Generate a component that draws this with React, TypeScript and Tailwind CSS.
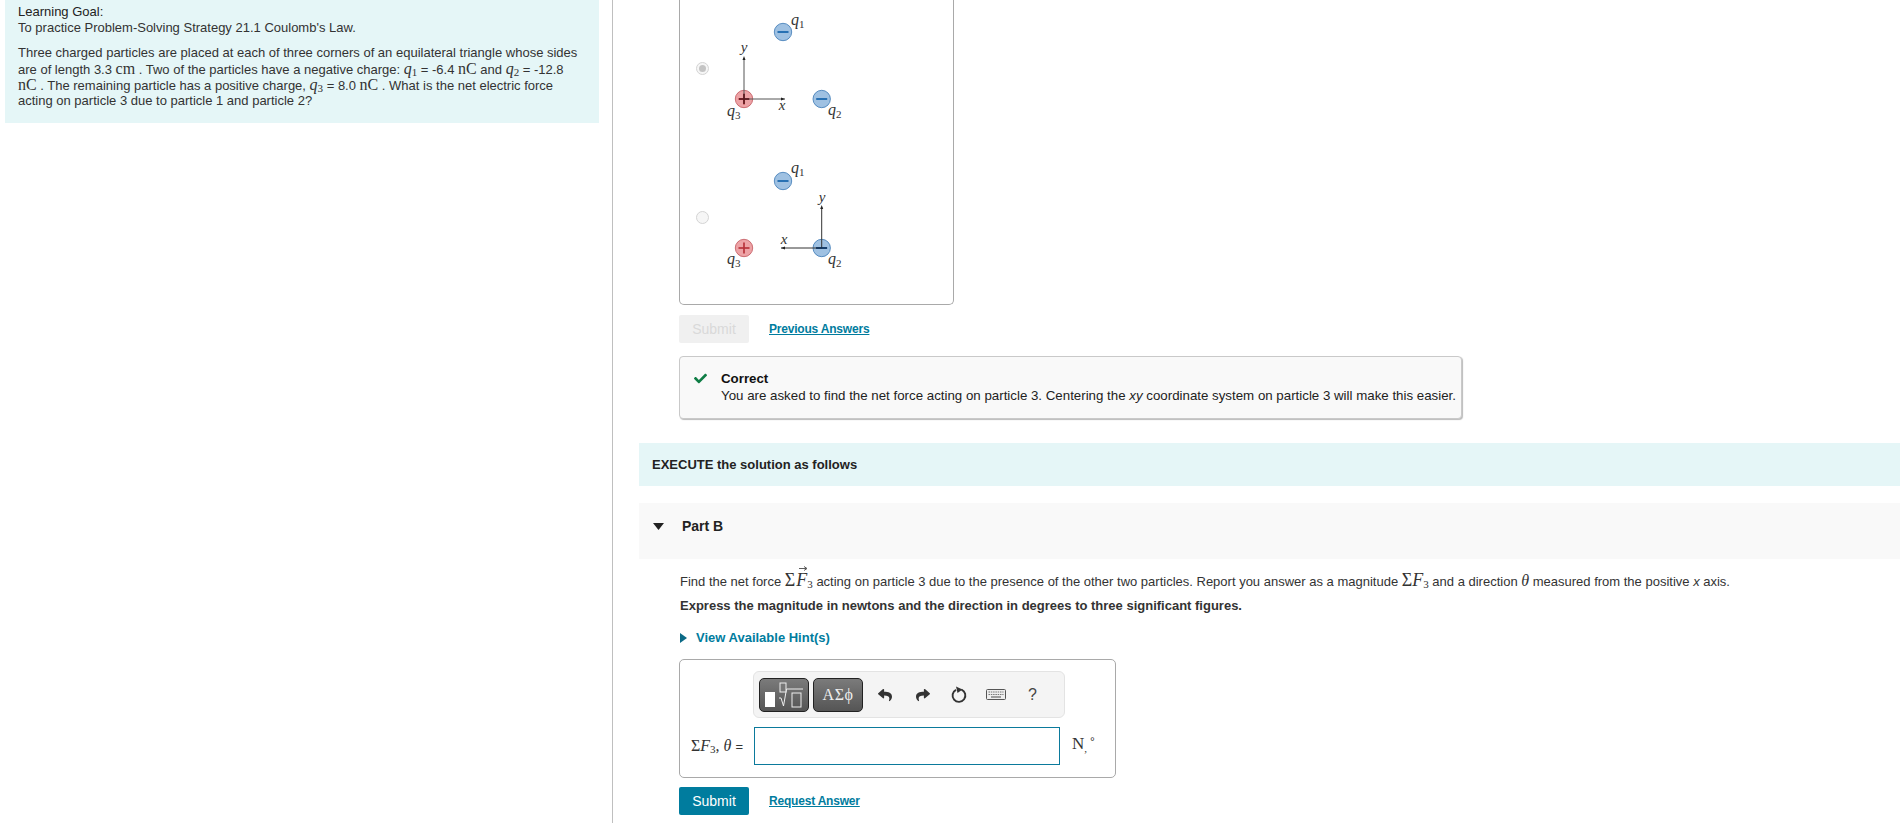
import React from "react";
import { FaReply, FaShare, FaCheck } from "react-icons/fa";

const M = ({ children }: { children: React.ReactNode }) => (
  <span className="font-['Liberation_Serif',serif] text-[16px] leading-none">{children}</span>
);
const V = ({ children }: { children: React.ReactNode }) => (
  <span className="font-['Liberation_Serif',serif] text-[16px] italic leading-none">{children}</span>
);
const Sub = ({ children }: { children: React.ReactNode }) => (
  <sub className="font-['Liberation_Serif',serif] text-[11px] not-italic leading-none bottom-[-2px]">{children}</sub>
);

function Charge({ x, y, pos }: { x: number; y: number; pos: boolean }) {
  return (
    <g>
      <circle cx={x} cy={y} r={8.7} fill={pos ? "#eda3a6" : "#9fc1e2"} stroke={pos ? "#c2565c" : "#3b78b5"} strokeWidth={0.8} />
      <line x1={x - 5.5} x2={x + 5.5} y1={y} y2={y} stroke={pos ? "#b8333b" : "#1462ab"} strokeWidth={1.7} />
      {pos && <line x1={x} x2={x} y1={y - 5.5} y2={y + 5.5} stroke="#b8333b" strokeWidth={1.7} />}
    </g>
  );
}

function QLabel({ x, y, n }: { x: number; y: number; n: string }) {
  return (
    <text x={x} y={y} fontFamily="Liberation Serif, serif" fontSize={16} fill="#333" fontStyle="italic">
      q<tspan fontSize={11} dy={3} fontStyle="normal">{n}</tspan>
    </text>
  );
}

function Axes({ ox, oy, ex, ey, color }: { ox: number; oy: number; ex: number; ey: number; color: string }) {
  const d = ex > ox ? -4 : 4;
  return (
    <g stroke={color} fill="#222">
      <line x1={ox} y1={oy} x2={ox} y2={ey} strokeWidth={1} />
      <line x1={ox} y1={oy} x2={ex} y2={oy} strokeWidth={1} />
      <path d={`M${ox} ${ey - 2}L${ox - 1.5} ${ey + 2}L${ox + 1.5} ${ey + 2}Z`} stroke="none" />
      <path d={`M${ex} ${oy}L${ex + d} ${oy - 1.5}L${ex + d} ${oy + 1.5}Z`} stroke="none" />
    </g>
  );
}

const AxisLabel = ({ x, y, t }: { x: number; y: number; t: string }) => (
  <text x={x} y={y} fontFamily="Liberation Serif, serif" fontSize={15} fontStyle="italic" fill="#333" textAnchor="middle">{t}</text>
);

function Diagram1() {
  return (
    <svg width={190} height={150} viewBox="0 0 190 150" className="block">
      <Charge x={38} y={99} pos />
      <Axes ox={38} oy={99} ex={79} ey={58} color="#555" />
      <line x1={38} x2={38} y1={94} y2={104} stroke="#5a1a1e" strokeWidth={1.6} />
      <line x1={33} x2={43} y1={99} y2={99} stroke="#5a1a1e" strokeWidth={1.6} />
      <Charge x={77} y={32} pos={false} />
      <Charge x={115.7} y={99} pos={false} />
      <AxisLabel x={38} y={52} t="y" />
      <AxisLabel x={76} y={110} t="x" />
      <QLabel x={85} y={25} n="1" />
      <QLabel x={21} y={116} n="3" />
      <QLabel x={122} y={115} n="2" />
    </svg>
  );
}

function Diagram2() {
  return (
    <svg width={190} height={154} viewBox="0 0 190 154" className="block">
      <Charge x={77} y={31} pos={false} />
      <Charge x={38} y={98} pos />
      <Charge x={115.7} y={98} pos={false} />
      <Axes ox={115.7} oy={98} ex={75} ey={57} color="#333" />
      <line x1={110} x2={121} y1={98} y2={98} stroke="#12335a" strokeWidth={1.6} />
      <AxisLabel x={116} y={52} t="y" />
      <AxisLabel x={78} y={94} t="x" />
      <QLabel x={85} y={23} n="1" />
      <QLabel x={21} y={114} n="3" />
      <QLabel x={122} y={114} n="2" />
    </svg>
  );
}

function Radio({ checked }: { checked?: boolean }) {
  return (
    <span className="flex h-[13px] w-[13px] items-center justify-center rounded-full border border-[#d4d4d4] bg-[#f6f6f6]">
      {checked && <span className="h-[7px] w-[7px] rounded-full bg-[#c4c4c4]" />}
    </span>
  );
}

const linkCls = "text-[12px] font-bold tracking-[-0.2px] text-[#007c9e] underline";
const lineCls = "h-[16px] whitespace-nowrap";

export default function App() {
  return (
    <div className="flex h-[823px] w-[1900px] overflow-hidden bg-white font-['Liberation_Sans',Arial,sans-serif] text-[14px] text-[#333]">
      <aside className="w-[613px] shrink-0 border-r border-[#bfbfbf] pl-[5px]">
        <div className="h-[123px] w-[594px] bg-[#e5f6f7] pl-[13px] pt-[4px] text-[13px] leading-[16px] text-[#333]">
          <div className="text-[#222]">Learning Goal:</div>
          <div>To practice Problem-Solving Strategy 21.1 Coulomb's Law.</div>
          <div className="mt-[9px]">
            <div className={lineCls}>Three charged particles are placed at each of three corners of an equilateral triangle whose sides</div>
            <div className={lineCls}>
              are of length 3.3 <M>cm</M> . Two of the particles have a negative charge: <V>q</V><Sub>1</Sub> = -6.4 <M>nC</M> and <V>q</V><Sub>2</Sub> = -12.8
            </div>
            <div className={lineCls}>
              <M>nC</M> . The remaining particle has a positive charge, <V>q</V><Sub>3</Sub> = 8.0 <M>nC</M> . What is the net electric force
            </div>
            <div className={lineCls}>acting on particle 3 due to particle 1 and particle 2?</div>
          </div>
        </div>
      </aside>

      <main className="min-w-0 flex-1">
        <div className="pl-[66px]">
          <section className="h-[305px] w-[275px] rounded-b-[5px] border-x border-b border-[#a9a9a9]">
            <div className="flex h-[150px]">
              <div className="flex w-[29px] shrink-0 items-start justify-end pt-[62px]"><Radio checked /></div>
              <div className="ml-[-3px]"><Diagram1 /></div>
            </div>
            <div className="flex h-[154px]">
              <div className="flex w-[29px] shrink-0 items-start justify-end pt-[61px]"><Radio /></div>
              <div className="ml-[-3px]"><Diagram2 /></div>
            </div>
          </section>

          <div className="mt-[10px] flex h-[28px] items-center gap-[20px]">
            <button className="h-[28px] w-[70px] rounded-[2px] bg-[#f0f0f0] text-[14px] text-[#d9d9d9]">Submit</button>
            <a className={linkCls}>Previous Answers</a>
          </div>

          <div className="mt-[13px] flex h-[63px] w-[783px] rounded-[4px] border border-[#c9c9c9] bg-[#f9f9f9] pl-[14px] pt-[13px] shadow-[1px_1px_1px_#bbb]">
            <FaCheck className="mt-[2px] h-[13px] w-[13px] text-[#0f7d45]" />
            <div className="ml-[14px] text-[13.3px] leading-[17px] text-[#222]">
              <div className="font-bold text-[#111]">Correct</div>
              <div>You are asked to find the net force acting on particle 3. Centering the <i>xy</i> coordinate system on particle 3 will make this easier.</div>
            </div>
          </div>
        </div>

        <div className="ml-[26px] mt-[24px] flex h-[43px] items-center bg-[#e5f6f7] pl-[13px] text-[13px] font-bold text-[#222]">
          EXECUTE the solution as follows
        </div>

        <div className="ml-[26px] mt-[17px] flex h-[56px] bg-[#f9f9f9] pl-[14px] pt-[14px]">
          <svg width={11} height={7} viewBox="0 0 11 7" className="mt-[6px]"><path d="M0 0h11L5.5 7z" fill="#222" /></svg>
          <span className="ml-[18px] text-[14px] font-bold leading-[18px] text-[#222]">Part B</span>
        </div>

        <div className="pl-[66px]">
          <p className="mt-[12px] h-[20px] whitespace-nowrap pl-[1px] text-[13px] leading-[20px]">
            Find the net force <M><span className="text-[18px]">Σ</span><i className="relative ml-[1px] text-[18px]">F<svg width={9} height={5} viewBox="0 0 9 5" className="absolute left-[3px] top-[-4px]"><path d="M0 2.5h7M5 0.5l3 2-3 2" stroke="#333" strokeWidth={0.8} fill="none" /></svg></i><Sub>3</Sub></M> acting on particle 3 due to the presence of the other two particles. Report you answer as a magnitude <M><span className="text-[18px]">Σ<i>F</i></span><Sub>3</Sub></M> and a direction <V><span className="text-[16px]">θ</span></V> measured from the positive <i>x</i> axis.
          </p>
          <p className="mt-[5px] h-[20px] pl-[1px] text-[13px] font-bold leading-[20px]">
            Express the magnitude in newtons and the direction in degrees to three significant figures.
          </p>
          <div className="mt-[12px] flex h-[20px] items-center pl-[1px] text-[13px] font-bold text-[#007c9e]">
            <svg width={7} height={10} viewBox="0 0 7 10" className="mr-[9px]"><path d="M0 0l7 5-7 5z" fill="#0b6a86" /></svg>
            View Available Hint(s)
          </div>

          <section className="mt-[11px] h-[119px] w-[437px] rounded-[5px] border border-[#a9a9a9] pl-[11px]">
            <div className="ml-[62px] mt-[11px] flex h-[47px] w-[312px] items-center rounded-[6px] border border-[#e3e3e3] bg-[#f4f4f4] pl-[5px]">
              <div className="flex h-[34px] w-[50px] items-center justify-center rounded-[5px] border border-[#222] bg-gradient-to-b from-[#7b7b7b] to-[#555]">
                <svg width={40} height={28} viewBox="0 0 40 28">
                  <rect x="1" y="11" width="10" height="15" fill="#fff" />
                  <path d="M15 17l2 0 2.5 8L22.5 8H39" stroke="#eee" strokeWidth={1} fill="none" />
                  <rect x="16" y="2" width="6" height="9" stroke="#eee" fill="#777" />
                  <rect x="28" y="12" width="9" height="14" stroke="#eee" fill="none" />
                </svg>
              </div>
              <div className="ml-[4px] flex h-[34px] w-[50px] items-center justify-center rounded-[5px] border border-[#222] bg-gradient-to-b from-[#7b7b7b] to-[#555] font-['Liberation_Serif',serif] text-[16px] tracking-[0.5px] text-[#eee]">
                ΑΣϕ
              </div>
              <FaReply className="ml-[15px] h-[14px] w-[14px] text-[#333]" />
              <FaShare className="ml-[24px] h-[14px] w-[14px] text-[#333]" />
              <svg width={18} height={18} viewBox="0 0 18 18" className="ml-[20px]">
                <path d="M11.5 3.6A6.4 6.4 0 1 1 6 3.8" fill="none" stroke="#333" strokeWidth={1.9} />
                <path d="M6 0.5l6.5 3-5 3.4z" fill="#333" />
              </svg>
              <svg width={20} height={11} viewBox="0 0 20 11" className="ml-[18px]">
                <rect x="0.5" y="0.5" width="19" height="10" rx="1" fill="#ededed" stroke="#555" />
                <path d="M2.5 3h15M2.5 5.5h15" stroke="#777" strokeWidth={1.2} strokeDasharray="1.5 0.8" />
                <path d="M5 8h10" stroke="#666" strokeWidth={1.2} />
              </svg>
              <span className="ml-[22px] font-['Liberation_Sans',sans-serif] text-[16px] text-[#444]">?</span>
            </div>

            <div className="mt-[9px] flex items-center">
              <div className="w-[63px] whitespace-nowrap font-['Liberation_Serif',serif] text-[16px] text-[#333]">
                Σ<i>F</i><Sub>3</Sub>, <i>θ</i> <span className="font-['Liberation_Sans',sans-serif] text-[13px]">=</span>
              </div>
              <div className="h-[38px] w-[306px] border border-[#0b7a9c] bg-white" />
              <div className="ml-[12px] flex items-start font-['Liberation_Serif',serif] text-[17px] leading-[24px] text-[#333]">N<span className="mt-[4px] text-[11px]">,</span><span className="ml-[3px] font-['Liberation_Sans',sans-serif] text-[12px] leading-[20px]">°</span></div>
            </div>
          </section>

          <div className="mt-[9px] flex h-[28px] items-center gap-[20px]">
            <button className="h-[28px] w-[70px] rounded-[2px] bg-[#007c9e] text-[14px] text-white">Submit</button>
            <a className={linkCls}>Request Answer</a>
          </div>
        </div>
      </main>
    </div>
  );
}
